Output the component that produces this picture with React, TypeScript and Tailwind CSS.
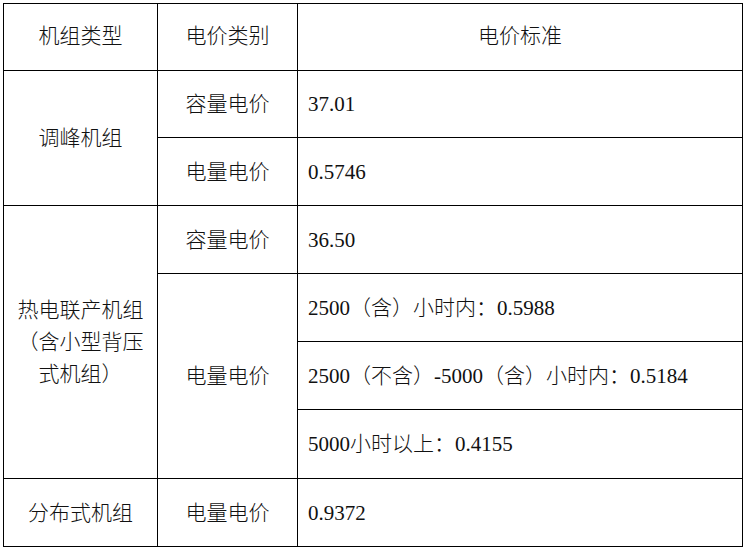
import React from "react";

const font = {
  fontFamily: '"Liberation Serif", "Noto Sans CJK SC", serif',
};

export default function App() {
  const cell = "border border-black align-middle p-0";
  return (
    <div className="bg-white w-[745px] h-[547px] pt-[3px] pl-[3px]" style={font}>
      <table className="border-collapse table-fixed w-[739px] text-[21px] leading-[32px] text-[#111] font-light">
        <colgroup>
          <col className="w-[154px]" />
          <col className="w-[140px]" />
          <col className="w-[445px]" />
        </colgroup>
        <tbody>
          <tr className="h-[67px]">
            <td className={`${cell} text-center pb-[2px]`}>机组类型</td>
            <td className={`${cell} text-center pb-[2px]`}>电价类别</td>
            <td className={`${cell} text-center pb-[2px]`}>电价标准</td>
          </tr>
          <tr className="h-[67px]">
            <td className={`${cell} text-center`} rowSpan={2}>调峰机组</td>
            <td className={`${cell} text-center`}>容量电价</td>
            <td className={`${cell} pl-[10px]`}>37.01</td>
          </tr>
          <tr className="h-[68px]">
            <td className={`${cell} text-center`}>电量电价</td>
            <td className={`${cell} pl-[10px]`}>0.5746</td>
          </tr>
          <tr className="h-[68px]">
            <td className={`${cell} text-center`} rowSpan={4}>
              热电联产机组
              <br />
              （含小型背压
              <br />
              式机组）
            </td>
            <td className={`${cell} text-center`}>容量电价</td>
            <td className={`${cell} pl-[10px]`}>36.50</td>
          </tr>
          <tr className="h-[68px]">
            <td className={`${cell} text-center`} rowSpan={3}>电量电价</td>
            <td className={`${cell} pl-[10px]`}>2500（含）小时内：0.5988</td>
          </tr>
          <tr className="h-[68px]">
            <td className={`${cell} pl-[10px]`}>2500（不含）-5000（含）小时内：0.5184</td>
          </tr>
          <tr className="h-[69px]">
            <td className={`${cell} pl-[10px]`}>5000小时以上：0.4155</td>
          </tr>
          <tr className="h-[68px]">
            <td className={`${cell} text-center`}>分布式机组</td>
            <td className={`${cell} text-center`}>电量电价</td>
            <td className={`${cell} pl-[10px]`}>0.9372</td>
          </tr>
        </tbody>
      </table>
    </div>
  );
}
